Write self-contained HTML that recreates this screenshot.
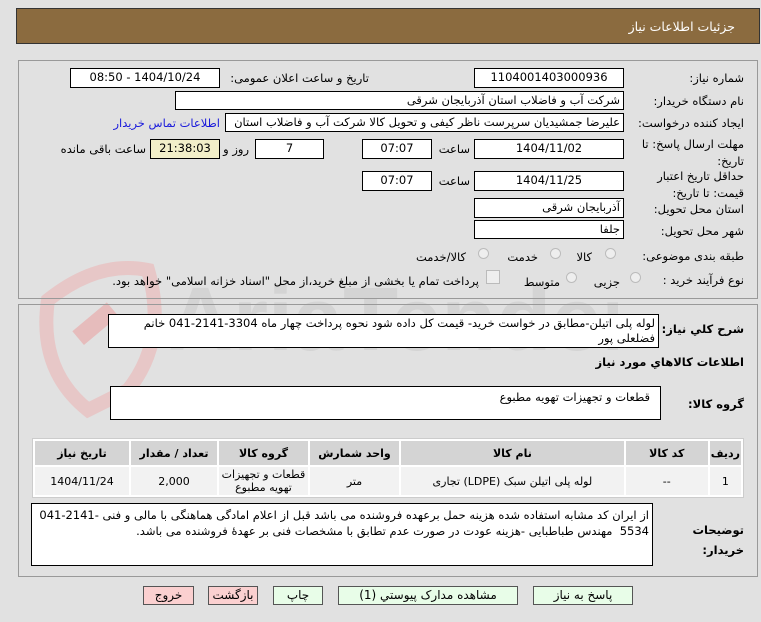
<!DOCTYPE html>
<html><head><meta charset="utf-8"><style>
body{margin:0;width:761px;height:622px;background:#e1e1e1;font-family:"DejaVu Sans","Liberation Sans",sans-serif;font-size:11.5px;color:#000;position:relative;overflow:hidden}
.a{position:absolute;white-space:nowrap}
.in{position:absolute;background:#fff;border:1px solid #000;box-sizing:border-box;direction:rtl;padding:0 3px;line-height:17px;overflow:hidden;white-space:nowrap}
.c{text-align:center}
.l{position:absolute;direction:rtl;text-align:right;white-space:nowrap}
.panel{position:absolute;border:1px solid #999;box-sizing:border-box}
.rad{position:absolute;width:11px;height:11px;border-radius:50%;border:1px solid #bbb;background:#eee;box-sizing:border-box}
table{border-collapse:separate;border-spacing:2px;position:absolute;left:32px;top:438px;width:712px;background:#fff;border:1px solid #ccc}
th{background:#d4d4d4;height:22px;font-weight:bold;font-size:11px}
td{background:#f2f2f2;height:26px;text-align:center;font-size:11px}
.btn{position:absolute;top:586px;height:19px;border:1px solid #555;box-sizing:border-box;text-align:center;line-height:17px;font-size:12px}
</style></head><body>
<div class="a" style="left:16px;top:8px;width:744px;height:36px;background:#8b6b3f;border:1px solid #333;box-sizing:border-box"></div>
<div class="l" style="right:26px;top:19px;color:#fff;font-size:12.5px">جزئیات اطلاعات نیاز</div>

<!-- watermark -->
<svg class="a" style="left:18px;top:240px" width="600" height="180">
<path d="M30 60 Q80 20 130 30 Q150 100 110 150 L70 170 Q20 130 30 60Z" fill="none" stroke="#e8c0c0" stroke-width="14" opacity=".8"/>
<rect x="55" y="75" width="45" height="18" fill="#e6bcbc" transform="rotate(-40 77 84)"/>
<text x="150" y="110" font-size="90" font-weight="bold" fill="#d4d4d4" font-family="Liberation Sans">AriaTender.net</text>
</svg>

<div class="panel" style="left:18px;top:60px;width:740px;height:239px"></div>
<div class="panel" style="left:18px;top:304px;width:740px;height:273px"></div>

<div class="l" style="right:17px;top:71px">شماره نیاز:</div>
<div class="in c" style="left:474px;top:68px;width:150px;height:20px">1104001403000936</div>
<div class="l" style="right:392px;top:71px">تاریخ و ساعت اعلان عمومی:</div>
<div class="in c" style="left:70px;top:68px;width:150px;height:20px">1404/10/24 - 08:50</div>

<div class="l" style="right:17px;top:94px">نام دستگاه خریدار:</div>
<div class="in" style="left:175px;top:91px;width:449px;height:19px">شرکت آب و فاضلاب استان آذربایجان شرقی</div>

<div class="l" style="right:17px;top:116px">ایجاد کننده درخواست:</div>
<div class="in" style="left:225px;top:113px;width:399px;height:19px">علیرضا جمشیدیان سرپرست ناظر کیفی و تحویل کالا شرکت آب و فاضلاب استان</div>
<div class="l" style="right:541px;top:116px;color:#1a1adb">اطلاعات تماس خریدار</div>

<div class="l" style="right:17px;top:136px;line-height:17px">مهلت ارسال پاسخ: تا<br>تاریخ:</div>
<div class="in c" style="left:474px;top:139px;width:150px;height:20px">1404/11/02</div>
<div class="l" style="right:291px;top:142px">ساعت</div>
<div class="in c" style="left:362px;top:139px;width:70px;height:20px">07:07</div>
<div class="in c" style="left:255px;top:139px;width:69px;height:20px">7</div>
<div class="l" style="right:512px;top:142px">روز و</div>
<div class="in c" style="left:150px;top:139px;width:70px;height:20px;background:#f2efc9">21:38:03</div>
<div class="l" style="right:615px;top:142px">ساعت باقی مانده</div>

<div class="l" style="right:17px;top:168px;line-height:17px">حداقل تاریخ اعتبار<br>قیمت: تا تاریخ:</div>
<div class="in c" style="left:474px;top:171px;width:150px;height:20px">1404/11/25</div>
<div class="l" style="right:291px;top:174px">ساعت</div>
<div class="in c" style="left:362px;top:171px;width:70px;height:20px">07:07</div>

<div class="l" style="right:17px;top:202px">استان محل تحویل:</div>
<div class="in" style="left:474px;top:198px;width:150px;height:20px">آذربایجان شرقی</div>
<div class="l" style="right:17px;top:224px">شهر محل تحویل:</div>
<div class="in" style="left:474px;top:220px;width:150px;height:19px">جلفا</div>

<div class="l" style="right:17px;top:249px">طبقه بندی موضوعی:</div>
<div class="rad" style="left:605px;top:248px"></div><div class="l" style="right:169px;top:250px">کالا</div>
<div class="rad" style="left:550px;top:248px"></div><div class="l" style="right:223px;top:250px">خدمت</div>
<div class="rad" style="left:478px;top:248px"></div><div class="l" style="right:295px;top:250px">کالا/خدمت</div>

<div class="l" style="right:17px;top:273px">نوع فرآیند خرید :</div>
<div class="rad" style="left:630px;top:272px"></div><div class="l" style="right:141px;top:275px">جزیی</div>
<div class="rad" style="left:566px;top:272px"></div><div class="l" style="right:201px;top:275px">متوسط</div>
<div class="a" style="left:486px;top:270px;width:12px;height:12px;background:#eee;border:1px solid #bbb"></div>
<div class="l" style="right:282px;top:274px">پرداخت تمام یا بخشی از مبلغ خرید،از محل "اسناد خزانه اسلامی" خواهد بود.</div>

<div class="l" style="right:17px;top:322px;font-weight:bold">شرح کلي نياز:</div>
<div class="in" style="left:108px;top:314px;width:551px;height:34px;white-space:normal;line-height:15px;padding-top:1px">لوله پلی اتیلن-مطابق در خواست خرید- قیمت کل داده شود نحوه پرداخت چهار ماه <span dir="ltr">041-2141-3304</span> خانم فضلعلی پور</div>
<div class="l" style="right:17px;top:355px;font-weight:bold">اطلاعات کالاهاي مورد نياز</div>
<div class="l" style="right:17px;top:397px;font-weight:bold">گروه کالا:</div>
<div class="in" style="left:110px;top:386px;width:551px;height:34px;padding:3px 10px;line-height:14px">قطعات و تجهیزات تهویه مطبوع</div>

<table dir="rtl">
<tr><th style="width:26px">ردیف</th><th style="width:80px">کد کالا</th><th>نام کالا</th><th style="width:87px">واحد شمارش</th><th style="width:87px">گروه کالا</th><th style="width:84px">تعداد / مقدار</th><th style="width:92px">تاریخ نیاز</th></tr>
<tr><td>1</td><td>--</td><td>لوله پلی اتیلن سبک (LDPE) تجاری</td><td>متر</td><td style="line-height:13px">قطعات و تجهیزات<br>تهویه مطبوع</td><td>2,000</td><td>1404/11/24</td></tr>
</table>

<div class="l" style="right:17px;top:520px;font-weight:bold;line-height:20px">توضیحات<br>خریدار:</div>
<div class="in" style="left:31px;top:503px;width:622px;height:63px;white-space:normal;line-height:16px;padding-top:3px">از ایران کد مشابه استفاده شده هزینه حمل برعهده فروشنده می باشد قبل از اعلام امادگی هماهنگی با مالی و فنی <span dir="ltr">041-2141-5534</span>&nbsp; مهندس طباطبایی -هزینه عودت در صورت عدم تطابق با مشخصات فنی بر عهدهٔ فروشنده می باشد.</div>

<div class="btn" style="left:143px;width:51px;background:#fbd0d0">خروج</div>
<div class="btn" style="left:208px;width:50px;background:#fbd0d0">بازگشت</div>
<div class="btn" style="left:273px;width:50px;background:#e8fde8">چاپ</div>
<div class="btn" style="left:338px;width:180px;background:#e8fde8">مشاهده مدارک پیوستي (1)</div>
<div class="btn" style="left:533px;width:100px;background:#e8fde8">پاسخ به نیاز</div>
</body></html>
